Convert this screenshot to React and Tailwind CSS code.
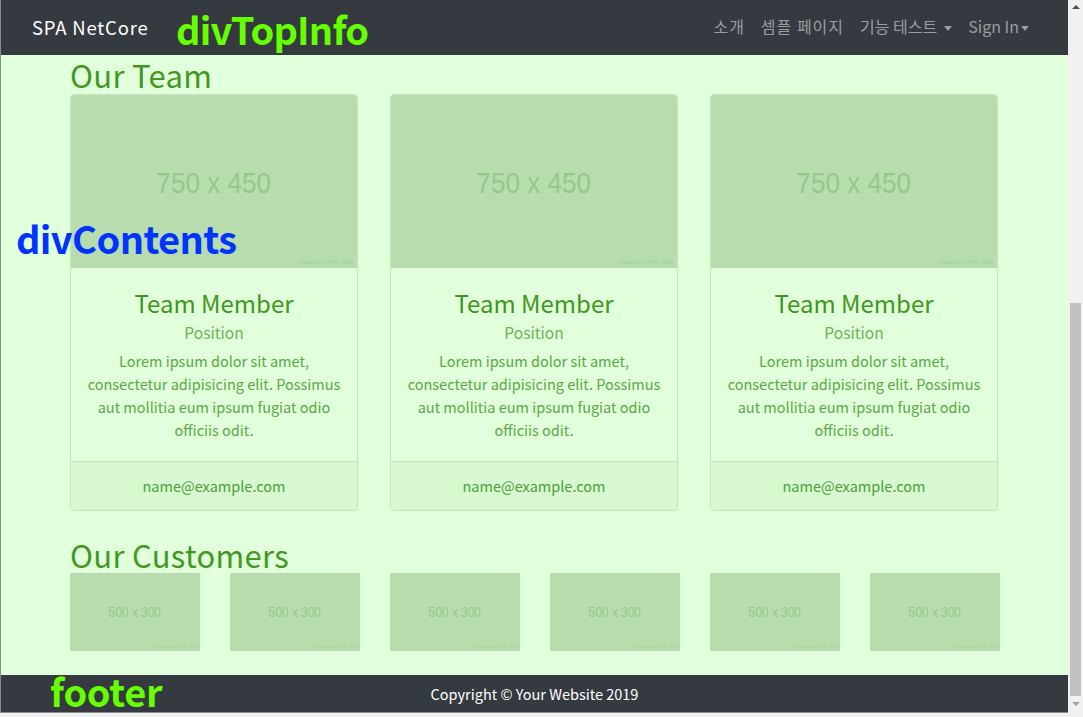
import React from "react";

const team = [1, 2, 3];
const customers = [1, 2, 3, 4, 5, 6];

const font = { fontFamily: '"Noto Sans CJK KR", "Noto Sans", sans-serif' };

function Placeholder({ label, big }) {
  return (
    <div
      className={`relative flex items-center justify-center bg-[#b7ddae] ${big ? "h-[173px] pt-[4px]" : "h-[78px] w-[130px] shrink-0"}`}
    >
      <span
        className={`inline-block font-['Liberation_Sans',Arial,sans-serif] text-[#97c68d] ${
          big ? "scale-x-90 text-[29px]" : "scale-x-[0.85] text-[14px]"
        }`}
      >
        {label}
      </span>
      <span
        className={`absolute font-['Liberation_Sans',Arial,sans-serif] text-[#9fcf95] ${
          big ? "bottom-[2px] right-[4px] text-[5px]" : "bottom-[1px] right-[2px] text-[4px]"
        }`}
      >
        Powered by HTML.COM
      </span>
    </div>
  );
}

function Caret({ gap }) {
  return (
    <span
      className={`inline-block h-0 w-0 border-x-[4px] border-t-[5px] border-x-transparent border-t-[#9a9da1] align-middle ${gap ? "ml-[7px]" : "ml-[2px]"}`}
    />
  );
}

export default function App() {
  return (
    <div className="flex h-[717px] w-[1083px] overflow-hidden bg-[#f1f1f1]" style={font}>
      <div className="relative flex h-[713px] w-[1068px] flex-col border-b border-l border-[#8a8a8a]">
        <nav className="flex h-[55px] shrink-0 items-center justify-between bg-[#343a40] pl-[31px] pr-[39px]">
          <span className="text-[18.5px] tracking-[0.8px] text-white">SPA NetCore</span>
          <ul className="flex items-center pb-[3px] text-[16px] text-[#9a9da1]">
            <li className="px-[8px] tracking-[1px]">소개</li>
            <li className="px-[8px] tracking-[1px]">셈플 페이지</li>
            <li className="px-[8px]">
              기능 테스트
              <Caret gap />
            </li>
            <li className="pl-[8px]">
              Sign In
              <Caret />
            </li>
          </ul>
        </nav>

        <main className="flex-1 bg-[#e0ffda] pl-[69px]">
          <h2 className="text-[31px] leading-[39px] tracking-[0.3px] text-[#42981f]">Our Team</h2>
          <div className="grid w-[928px] grid-cols-3 gap-[32px]">
            {team.map((i) => (
              <div key={i} className="overflow-hidden rounded-[4px] border border-[#c3e5ba]">
                <Placeholder big label="750 x 450" />
                <div className="px-[12px] pt-[20px] pb-[20px] text-center">
                  <h4 className="text-[24px] leading-[29px] text-[#3f971d]">Team Member</h4>
                  <p className="mt-[3px] text-[15.5px] leading-[24px] text-[#6cb25a]">Position</p>
                  <p className="mt-[5px] text-[14.5px] leading-[23px] text-[#5ba847]">
                    Lorem ipsum dolor sit amet, consectetur adipisicing elit. Possimus aut mollitia eum ipsum fugiat odio officiis odit.
                  </p>
                </div>
                <div className="border-t border-[#c3e5ba] bg-[#d8f8d0] py-[12px] text-center text-[14.5px] leading-[24px] text-[#4f9e3d]">
                  name@example.com
                </div>
              </div>
            ))}
          </div>

          <h2 className="mt-[25px] text-[31px] leading-[37px] tracking-[0.3px] text-[#42981f]">Our Customers</h2>
          <div className="flex w-[930px] gap-[30px]">
            {customers.map((i) => (
              <Placeholder key={i} label="500 x 300" />
            ))}
          </div>
        </main>

        <footer className="flex h-[37px] shrink-0 items-center justify-center bg-[#343a40] text-[14.5px] text-white">
          Copyright © Your Website 2019
        </footer>

        <span className="absolute left-[175px] top-[7px] text-[38px] font-bold leading-[44px] tracking-[-0.8px] text-[#66ff00]">divTopInfo</span>
        <span className="absolute left-[15px] top-[216px] text-[38px] font-bold leading-[44px] tracking-[-0.6px] text-[#0033ff]">divContents</span>
        <span className="absolute left-[49px] top-[670px] text-[38px] font-bold leading-[42px] tracking-[-0.3px] text-[#66ff00]">footer</span>
      </div>

      <div className="flex w-[15px] flex-col items-center bg-[#f1f1f1]">
        <span className="mt-[5px] h-0 w-0 border-x-[4px] border-b-[4px] border-x-transparent border-b-[#505050]" />
        <div className="mt-[294px] h-[393px] w-[11px] bg-[#c1c1c1]" />
        <span className="mt-[6px] h-0 w-0 border-x-[4px] border-t-[4px] border-x-transparent border-t-[#a3a3a3]" />
      </div>
    </div>
  );
}
